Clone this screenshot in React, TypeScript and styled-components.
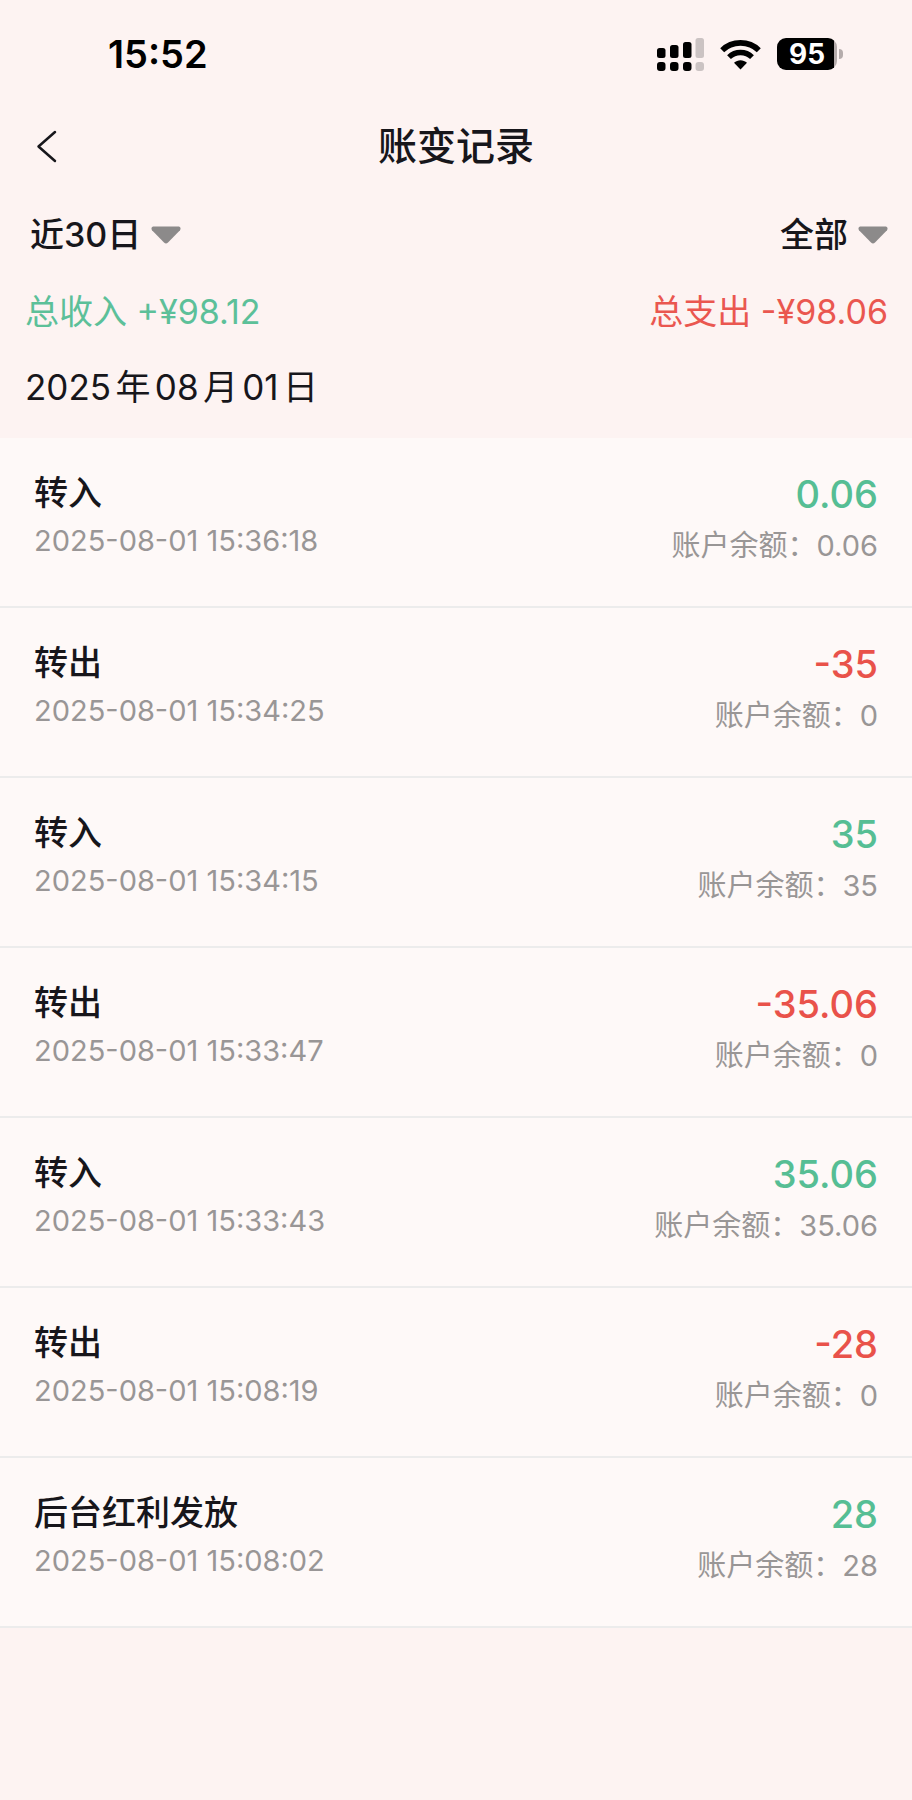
import React from "react";
import styled, { createGlobalStyle } from "styled-components";

const GlobalStyle = createGlobalStyle`
  *, *::before, *::after { box-sizing: border-box; }
  body {
    margin: 0;
    background: #fdf3f2;
    color: #17161b;
    font-family: Inter, "Noto Sans CJK SC", sans-serif;
    text-autospace: normal;
  }
`;

const Page = styled.div`
  min-height: 100vh;
`;

const StatusBar = styled.header`
  display: flex;
  align-items: center;
  justify-content: space-between;
  height: 108px;
  padding: 0 69px 0 108px;
`;

const Clock = styled.time`
  color: #000;
  font-size: 38px;
  font-weight: 600;
  line-height: 48px;
`;

const StatusIcons = styled.div`
  display: flex;
  align-items: center;
  gap: 16px;
`;

const Battery = styled.div`
  display: flex;
  align-items: center;
  gap: 2px;
`;

const BatteryBody = styled.span`
  width: 60px;
  height: 32px;
  border-radius: 9px;
  background: linear-gradient(90deg, #000 57px, #b5acac 57px);
  color: #fff;
  font-size: 28px;
  font-weight: 700;
  line-height: 32px;
  text-align: center;
`;

const BatteryTip = styled.span`
  width: 4px;
  height: 10px;
  border-radius: 0 4px 4px 0;
  background: #b5acac;
`;

const NavBar = styled.nav`
  display: grid;
  grid-template-columns: 96px 1fr 96px;
  align-items: center;
  height: 76px;
`;

const BackButton = styled.button`
  display: flex;
  align-items: center;
  height: 76px;
  padding: 0 0 0 36px;
  border: 0;
  background: none;
  color: inherit;
`;

const Title = styled.h1`
  margin: 0;
  font-size: 39px;
  font-weight: 500;
  line-height: 58px;
  text-align: center;
`;

const Filters = styled.div`
  display: flex;
  justify-content: space-between;
  padding: 26px 24px 0 30px;
`;

const Filter = styled.label`
  display: flex;
  align-items: center;
  gap: 10px;
`;

const FilterSelect = styled.select`
  appearance: none;
  field-sizing: content;
  height: 50px;
  padding: 0;
  border: 0;
  background: none;
  color: inherit;
  font: inherit;
  font-size: 34px;
  font-weight: 500;
  line-height: 50px;
`;

const Totals = styled.div`
  display: flex;
  justify-content: space-between;
  padding: 27px 24px 0 25px;
  font-size: 34px;
  line-height: 50px;
`;

const Total = styled.span<{ $income: boolean }>`
  color: ${(p) => (p.$income ? "#5cc099" : "#ea5750")};
`;

const DateHeading = styled.h2`
  margin: 0;
  padding: 25px 25px 26px;
  font-size: 35px;
  font-weight: 400;
  line-height: 50px;
`;

const Records = styled.ul`
  margin: 0;
  padding: 0;
  list-style: none;
  background: #fef9f8;
`;

const Record = styled.li`
  display: flex;
  justify-content: space-between;
  padding: 30px 34px 37px;
  border-bottom: 2px solid #ececec;
`;

const Column = styled.div<{ $end?: boolean }>`
  display: flex;
  flex-direction: column;
  gap: ${(p) => (p.$end ? "4px" : "0")};
  padding-top: ${(p) => (p.$end ? "1px" : "0")};
  text-align: ${(p) => (p.$end ? "right" : "left")};
`;

const RecordName = styled.span`
  font-size: 34px;
  font-weight: 500;
  line-height: 50px;
`;

const Amount = styled.span<{ $income: boolean }>`
  color: ${(p) => (p.$income ? "#56be94" : "#e9524a")};
  font-size: 38px;
  font-weight: 500;
  line-height: 50px;
`;

const Detail = styled.span`
  color: #999696;
  font-size: 29px;
  line-height: 46px;
`;

const records = [
  { name: "转入", time: "2025-08-01 15:36:18", amount: "0.06", balance: "0.06" },
  { name: "转出", time: "2025-08-01 15:34:25", amount: "-35", balance: "0" },
  { name: "转入", time: "2025-08-01 15:34:15", amount: "35", balance: "35" },
  { name: "转出", time: "2025-08-01 15:33:47", amount: "-35.06", balance: "0" },
  { name: "转入", time: "2025-08-01 15:33:43", amount: "35.06", balance: "35.06" },
  { name: "转出", time: "2025-08-01 15:08:19", amount: "-28", balance: "0" },
  { name: "后台红利发放", time: "2025-08-01 15:08:02", amount: "28", balance: "28" },
];

const SignalIcon = () => (
  <svg width="47" height="33" viewBox="0 0 47 33" aria-hidden="true">
    <rect x="0" y="10" width="8.500" height="10" rx="2.500" />
    <rect x="13" y="7" width="8.500" height="13" rx="2.500" />
    <rect x="26" y="4" width="8.500" height="16" rx="2.500" />
    <rect x="38.500" y="0" width="8.500" height="20" rx="2.500" fill="#cbc3c3" />
    <rect x="0" y="24" width="8.500" height="9" rx="3" />
    <rect x="13" y="24" width="8.500" height="9" rx="3" />
    <rect x="26" y="24" width="8.500" height="9" rx="3" />
    <rect x="38.500" y="24" width="8.500" height="9" rx="3" fill="#cbc3c3" />
  </svg>
);

const WifiIcon = () => (
  <svg width="41" height="31" viewBox="0 0 41 31" aria-hidden="true">
    <path d="M2.2 11.2C12 1.4 29 1.4 38.800 11.200" fill="none" stroke="#000" strokeWidth="5.600" />
    <path d="M9 18.200C15.300 12 25.700 12 32 18.200" fill="none" stroke="#000" strokeWidth="5.400" />
    <path d="M14 23.800C17.600 20.400 23.400 20.400 27 23.800L20.500 30.500Z" />
  </svg>
);

const BackIcon = () => (
  <svg width="21" height="33" viewBox="0 0 21 33" fill="none" stroke="currentColor" strokeWidth="2.500" strokeLinecap="round" strokeLinejoin="round" aria-hidden="true">
    <path d="M19 2L2.500 16.500L19 31" />
  </svg>
);

const CaretIcon = () => (
  <svg width="30" height="18" viewBox="0 0 30 18" fill="#8c8a8a" aria-hidden="true">
    <path d="M2 0.500H28Q30.500 1.500 29 4.200L17 16.500Q15 18.500 13 16.500L1 4.200Q-0.500 1.500 2 0.500Z" />
  </svg>
);

export default function App() {
  return (
    <Page>
      <GlobalStyle />
      <StatusBar>
        <Clock>15:52</Clock>
        <StatusIcons>
          <SignalIcon />
          <WifiIcon />
          <Battery>
            <BatteryBody>95</BatteryBody>
            <BatteryTip />
          </Battery>
        </StatusIcons>
      </StatusBar>
      <NavBar>
        <BackButton type="button" aria-label="返回">
          <BackIcon />
        </BackButton>
        <Title>账变记录</Title>
      </NavBar>
      <main>
        <Filters>
          <Filter>
            <FilterSelect aria-label="时间范围">
              <option>近30日</option>
            </FilterSelect>
            <CaretIcon />
          </Filter>
          <Filter>
            <FilterSelect aria-label="类型">
              <option>全部</option>
            </FilterSelect>
            <CaretIcon />
          </Filter>
        </Filters>
        <Totals>
          <Total $income>总收入 +¥98.12</Total>
          <Total $income={false}>总支出 -¥98.06</Total>
        </Totals>
        <DateHeading>2025年08月01日</DateHeading>
        <Records>
          {records.map((r) => (
            <Record key={r.time}>
              <Column>
                <RecordName>{r.name}</RecordName>
                <Detail as="time">{r.time}</Detail>
              </Column>
              <Column $end>
                <Amount $income={!r.amount.startsWith("-")}>{r.amount}</Amount>
                <Detail>账户余额：{r.balance}</Detail>
              </Column>
            </Record>
          ))}
        </Records>
      </main>
    </Page>
  );
}
